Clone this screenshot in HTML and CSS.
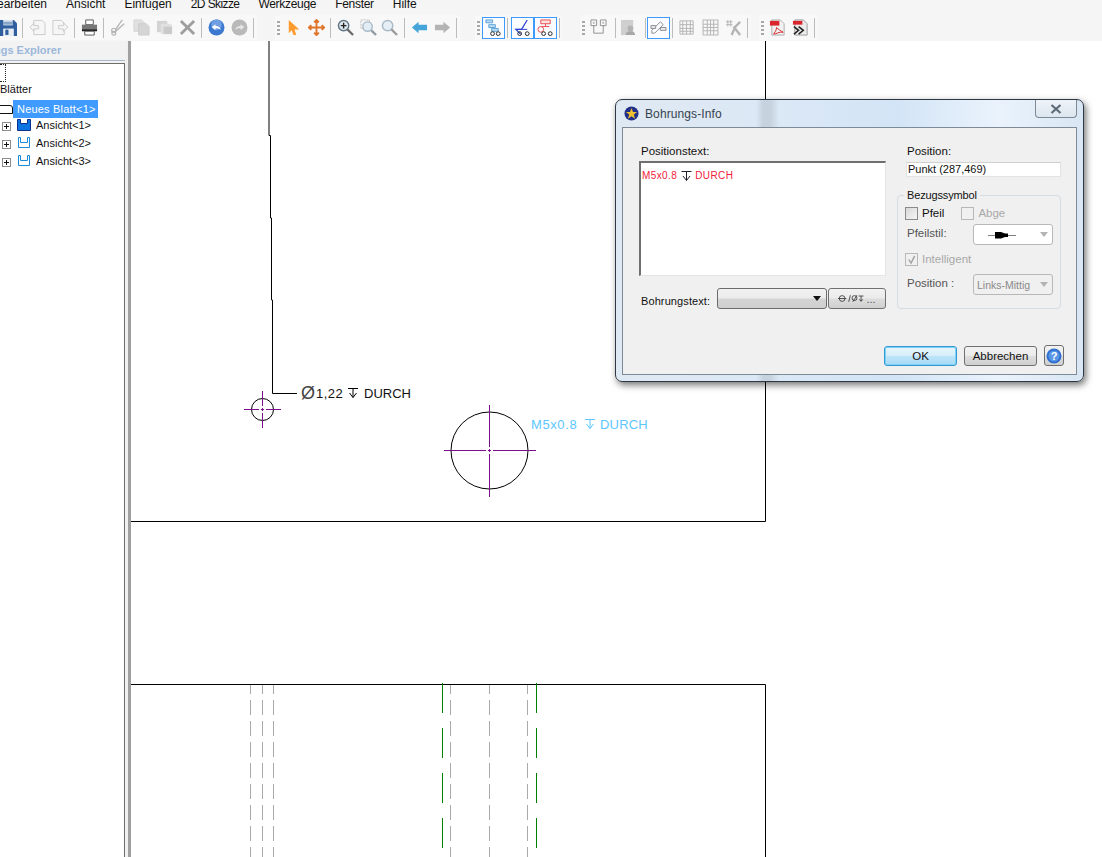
FILE: index.html
```html
<!DOCTYPE html>
<html lang="en">
<head>
    <meta charset="UTF-8">
    <title>Bohrungs-Info</title>
    <link rel="stylesheet" href="styles.css">
</head>
<body>
    <!-- Menu, cut off at the top of the shot -->
    <nav class="menu-bar">
        <span>Bearbeiten</span>
        <span>Ansicht</span>
        <span>Einfügen</span>
        <span class="narrow">2D Skizze</span>
        <span class="snug">Werkzeuge</span>
        <span class="snug">Fenster</span>
        <span>Hilfe</span>
    </nav>

    <div class="tool-bar">
        <div class="tool-group first">
            <span class="tool"><svg viewBox="0 0 16 16"><path d="M0 1h13l3 3v12H0z" fill="#2f5f9e"/><path d="M3 1h9v5H3z" fill="#dfe8f2"/><path d="M3 3h9M3 4.6h9" stroke="#6c8fb8"/><path d="M3 9h10v7H3z" fill="#e8edf3"/><path d="M5 10h3v5H5z" fill="#2f5f9e"/></svg></span>
            <i class="sep"></i>
            <span class="tool"><svg viewBox="0 0 18 18" class="off"><path d="M5 1.500h9l3 3v12H5z" fill="#f6f6f6" stroke="#c4c4c4"/><path d="M1 8.500 5 4.500V7h5v3.500H5V13z" fill="#f6f6f6" stroke="#c4c4c4"/></svg></span>
            <span class="tool"><svg viewBox="0 0 18 18" class="off"><path d="M1 1.500h9l3 3v12H1z" fill="#f6f6f6" stroke="#c4c4c4"/><path d="M17 8.500 12 4.500V7H7v3.500h5V13z" fill="#f6f6f6" stroke="#c4c4c4"/></svg></span>
            <i class="sep"></i>
            <span class="tool"><svg viewBox="0 0 18 18"><path d="M5 1h8v5H5z" fill="#fff" stroke="#555"/><path d="M1 6h16v6H1z" fill="#777"/><path d="M1 11h16v2H1z" fill="#222"/><path d="M4 13h10v4H4z" fill="#fff" stroke="#555"/></svg></span>
            <i class="sep"></i>
            <span class="tool"><svg viewBox="0 0 18 18" class="off" fill="none" stroke="#a8a8a8" stroke-width="1.3"><path d="M13 1 6 11M15 5 6 13"/><circle cx="4" cy="12" r="2.2"/><circle cx="4" cy="15" r="2"/></svg></span>
            <span class="tool"><svg viewBox="0 0 18 18" class="off"><path d="M1 1h8l3 3v9H1z" fill="#dcdcdc" stroke="#cfcfcf"/><path d="M6 5h8l3 3v9H6z" fill="#d0d0d0" stroke="#c6c6c6"/></svg></span>
            <span class="tool"><svg viewBox="0 0 18 18" class="off"><path d="M1 2h11v12H1z" fill="#cdcdcd"/><path d="M5 5h10l2 2v9H5z" fill="#dedede"/><path d="M8 8h9v8H8z" fill="#c2c2c2"/></svg></span>
            <span class="tool"><svg viewBox="0 0 18 18" class="off"><path d="M2 2 16 16M16 2 2 16" stroke="#8f8f8f" stroke-width="3"/></svg></span>
            <i class="sep"></i>
            <span class="tool"><svg viewBox="0 0 16 16"><circle cx="8" cy="8" r="7.5" fill="#3b78d0"/><circle cx="8" cy="5.5" r="5" fill="#6f9fe2"/><path d="M3.500 7.500 7 5v1.600c3 0 4.600 1.400 5 3.800-1.200-1.300-2.800-1.800-5-1.600v1.700z" fill="#fff"/></svg></span>
            <span class="tool"><svg viewBox="0 0 16 16"><circle cx="8" cy="8" r="7.500" fill="#b9b9b9"/><path d="M12.500 7.500 9 5v1.600c-3 0-4.600 1.400-5 3.800 1.200-1.300 2.800-1.800 5-1.600v1.700z" fill="#e6e6e6"/></svg></span>
            <i class="sep"></i>
        </div>

        <div class="tool-group view-tools">
            <i class="grip"></i>
            <span class="tool"><svg viewBox="0 0 16 18"><path d="M3 1 14 11 9 11 11 17 8 17 6 12 3 15z" fill="#ff9a2e"/></svg></span>
            <span class="tool"><svg viewBox="0 0 18 18" fill="none" stroke="#e0762a" stroke-width="2"><path d="M9 1v16M1 9h16M6.500 3.500 9 1l2.500 2.500M6.500 14.500 9 17l2.500-2.500M3.500 6.500 1 9l2.500 2.500M14.500 6.500 17 9l-2.500 2.500"/></svg></span>
            <i class="sep"></i>
            <span class="tool"><svg viewBox="0 0 18 18" fill="none"><circle cx="7" cy="7" r="5.500" fill="#dfe8ef" stroke="#5f7484" stroke-width="1.500"/><path d="M4 7h6M7 4v6" stroke="#222" stroke-width="1.500"/><path d="m11 11 6 6" stroke="#6b6b6b" stroke-width="2.400"/></svg></span>
            <span class="tool"><svg viewBox="0 0 18 18" fill="none"><path d="M1 1h9v9H1z" stroke="#bbb" stroke-dasharray="2 1"/><circle cx="8" cy="8" r="5" fill="#e3edf5" stroke="#a9bac7" stroke-width="1.500"/><path d="m12 12 5 5" stroke="#8d9aa5" stroke-width="2.400"/></svg></span>
            <span class="tool pull"><svg viewBox="0 0 18 18" fill="none"><circle cx="7" cy="7" r="5.500" fill="#e6eff6" stroke="#a9bac7" stroke-width="1.500"/><path d="m11 11 6 6" stroke="#9a9a9a" stroke-width="2.400"/></svg></span>
            <i class="sep"></i>
            <span class="tool"><svg viewBox="0 0 18 14"><path d="M1 7 8 1v3h9v6H8v3z" fill="#45a5d8"/></svg></span>
            <span class="tool"><svg viewBox="0 0 18 14"><path d="M17 7 10 1v3H1v6h9v3z" fill="#b4b4b4"/></svg></span>
            <i class="sep"></i>
        </div>

        <div class="tool-group tree-tools">
            <i class="grip"></i>
            <span class="tool picked"><svg viewBox="0 0 18 18" fill="none"><path d="M1 1h7v3H1zM4 6h7v3H4z" fill="#bcdcf4" stroke="#5aa0d8"/><path d="M7 10h7v3H7z" fill="#bcdcf4" stroke="#5aa0d8"/><circle cx="8" cy="15.500" r="2" stroke="#222"/><circle cx="14" cy="15.500" r="2" stroke="#222"/></svg></span>
            <i class="sep tight"></i>
            <span class="tool picked"><svg viewBox="0 0 18 18" fill="none"><path d="M14 1 8 11H2l5 5" stroke="#2a3fd0" stroke-width="1.300"/><path d="M2 11h12" stroke="#2a3fd0"/><circle cx="6" cy="15.500" r="2" stroke="#222"/><circle cx="14" cy="15.500" r="2" stroke="#222"/></svg></span>
            <span class="tool picked"><svg viewBox="0 0 18 18" fill="none"><path d="M4 1h10v4H4z" fill="#fde0e0" stroke="#e84848"/><path d="M9 5v3M5 8h8" stroke="#e84848"/><circle cx="4" cy="11" r="3" stroke="#e84848"/><circle cx="7" cy="15.500" r="2" stroke="#222"/><circle cx="14" cy="15.500" r="2" stroke="#222"/></svg></span>
            <i class="sep last"></i>
        </div>

        <div class="tool-group grid-tools">
            <i class="grip"></i>
            <span class="tool"><svg viewBox="0 0 18 18" fill="none" stroke="#8f8f8f"><path d="M1 1h6v6H1zM11 1h6v6h-6zM4 7v8h10V7"/><path d="M3 3h2v2H3zM13 3h2v2h-2z" fill="#bbb" stroke="none"/></svg></span>
            <i class="sep wide"></i>
            <span class="tool"><svg viewBox="0 0 18 18"><path d="M1 1h13v16H1z" fill="#cfcfcf"/><circle cx="11" cy="10" r="3" fill="#b2b2b2"/><path d="M6 17c0-3 2-4 5-4s5 1 5 4z" fill="#a8a8a8"/></svg></span>
            <i class="sep wide"></i>
            <span class="tool picked"><svg viewBox="0 0 18 18" fill="none" stroke="#888"><path d="m2 12 9-9 3 3-9 9H2z"/><path d="M1 7h5v3H1zM11 9h6v3h-6z" fill="#eee"/></svg></span>
            <i class="sep"></i>
            <span class="tool"><svg viewBox="0 0 18 18" fill="none" stroke="#b2b2b2"><path d="M1 2h14v14H1zM1 6h14M1 10h14M1 13h14M4 2v14M8 2v14M12 2v14"/></svg></span>
            <span class="tool"><svg viewBox="0 0 16 16" fill="none" stroke="#b8b8b8"><path d="M1 1h14v14H1zM1 5h14M1 8h14M1 11h14M5 1v14M8 1v14M11 1v14"/></svg></span>
            <span class="tool"><svg viewBox="0 0 18 18" fill="none" stroke="#b4b4b4"><path d="M1 3h7M1 6h7M3 1v7M6 1v7"/><path d="m9 8 7 9M16 3l-5 5-4 9" stroke-width="2.500"/></svg></span>
            <i class="sep"></i>
        </div>

        <div class="tool-group">
            <i class="grip"></i>
            <span class="tool"><svg viewBox="0 0 18 18"><path d="M3 1h9l4 4v12H3z" fill="#f2f2f2" stroke="#aaa"/><path d="M1 2h10v5H1z" fill="#d8262c"/><path d="M8 9c0 4-3 6-3 7 2 0 7-3 10-2-2-1-5-3-7-5z" fill="none" stroke="#d8262c"/></svg></span>
            <span class="tool"><svg viewBox="0 0 18 18"><path d="M3 1h9l4 4v12H3z" fill="#ececec" stroke="#999"/><path d="M1 2h10v4H1z" fill="#d8262c"/><path d="m2 8 5 4-5 4M7 8l5 4-5 4" fill="none" stroke="#222" stroke-width="1.600"/></svg></span>
            <i class="sep"></i>
        </div>
    </div>

    <main class="work-area">
        <aside class="side-panel">
            <h2 class="panel-title">Drawings Explorer</h2>
            <div class="tree-box">
                <div class="tree-root"></div>
                <div class="tree-row">Blätter</div>
                <div class="tree-row sheet-row">
                    <i class="sheet-icon"></i>
                    <span class="tree-picked">Neues Blatt&lt;1&gt;</span>
                </div>
                <div class="tree-row view-row first-view">
                    <i class="plus"></i>
                    <svg class="view-icon" viewBox="0 0 14 12"><path d="M.5.500h3v4h7v-4h3v11H.5z" fill="#0b74e0" stroke="#0a2f8a"/></svg>
                    <span>Ansicht&lt;1&gt;</span>
                </div>
                <div class="tree-row view-row">
                    <i class="plus"></i>
                    <svg class="view-icon" viewBox="0 0 14 12"><path d="M1.500.500v10h11V.500M1.500.500h2v5h7v-5h2" fill="none" stroke="#1d8ad8"/></svg>
                    <span>Ansicht&lt;2&gt;</span>
                </div>
                <div class="tree-row view-row">
                    <i class="plus"></i>
                    <svg class="view-icon" viewBox="0 0 14 12"><path d="M1.500.500v10h11V.500M1.500.500h2v5h7v-5h2" fill="none" stroke="#1d8ad8"/></svg>
                    <span>Ansicht&lt;3&gt;</span>
                </div>
            </div>
        </aside>
        <div class="splitter"></div>

        <!-- viewBox is in page coordinates -->
        <svg class="sheet" viewBox="131 41 971 816">
            <g fill="none" stroke="#000">
                <path d="M269 41V135.500H270.500V218H271.500V300H272.500V393.500H297"/>
                <path d="M765.500 41V521.500H131"/>
                <path d="M131 684.500H765.500V857"/>
                <circle cx="262.500" cy="409.500" r="11"/>
                <circle cx="489.500" cy="450.500" r="38.500"/>
            </g>
            <g stroke="#7b0f8c" fill="none">
                <path d="M244 409.500h15m2 0h3m2 0h15M262.500 391v15m0 2v3m0 2v15"/>
                <path d="M444 450.500h42m2 0h3m2 0h43M489.500 405v42m0 2v3m0 2v43"/>
            </g>
            <text class="dim dia" x="301" y="399">Ø</text>
            <text class="dim" x="316" y="398" letter-spacing=".5">1,22</text>
            <path d="M348 388.500h10M353 388.500v9M349.500 393l3.500 4.500 3.500-4.500" fill="none" stroke="#000"/>
            <text class="dim" x="364" y="398">DURCH</text>
            <text class="dim blue" x="531" y="429" letter-spacing=".6">M5x0.8</text>
            <text class="dim blue" x="600" y="429" letter-spacing=".2">DURCH</text>
            <path d="M585 419.500h10M590 419.500v9M586.500 424l3.500 4.500 3.500-4.500" fill="none" stroke="#5cc6ff"/>
            <path class="hidden-line" d="M250.500 685V857M262.500 685V857M273.500 685V857M450.500 685V857M489.500 685V857M527.500 685V857"/>
            <path class="hole-line" d="M442.500 683V857M536.500 683V857"/>
        </svg>
    </main>

    <section class="dialog">
        <header class="dialog-title">
            <svg class="app-icon" viewBox="0 0 16 16"><circle cx="8" cy="8" r="7.500" fill="#23308a"/><path d="m8 2 1.600 4.300H14l-3.600 2.700 1.400 4.500L8 10.800l-3.800 2.700L5.600 9 2 6.300h4.400z" fill="#f2c230"/></svg>
            <span>Bohrungs-Info</span>
            <button class="close-btn"><svg viewBox="0 0 12 10"><path d="m1.500 1 9 8m0-8-9 8" stroke="#5b6a78" stroke-width="2.200"/></svg></button>
        </header>
        <div class="dialog-client">
            <div class="dialog-main">
                <div class="col-left">
                    <div class="field-label">Positionstext:</div>
                    <div class="text-box">
                        <span>M5x0.8</span>
                        <svg class="depth-sign" viewBox="0 0 11 11"><path d="M.5 1.500h10M5.500 1.500v9M2 6l3.500 4.500L9 6" fill="none" stroke="#223"/></svg>
                        <span>DURCH</span>
                    </div>
                    <div class="hole-row">
                        <label class="hole-label">Bohrungstext:</label>
                        <div class="hole-combo"><i class="caret dark"></i></div>
                        <button class="symbol-btn">
                            <svg viewBox="0 0 34 10"><g fill="none" stroke="#333"><circle cx="5" cy="5" r="3.500"/><path d="M0 5h10M13 9l2-8"/><circle cx="20" cy="4.500" r="3"/><path d="M18 9l5-8M25 2h6M28 2v6M26 6l2 2.500L30 6"/></g></svg><span>...</span>
                        </button>
                    </div>
                </div>
                <div class="col-right">
                    <div class="field-label">Position:</div>
                    <div class="pos-input">Punkt (287,469)</div>
                    <fieldset class="ref-group">
                        <legend>Bezugssymbol</legend>
                        <div class="check-row">
                            <i class="check"></i><span class="check-text">Pfeil</span>
                            <i class="check off second"></i><span class="check-text muted">Abge</span>
                        </div>
                        <div class="select-row">
                            <span class="row-label">Pfeilstil:</span>
                            <div class="select-box">
                                <svg class="arrow-style" viewBox="0 0 28 8"><path d="M0 4h7l0-3h6l4 1.500h3V4h8v.500h-8v1.500h-3l-4 1.500H7v-3H0z"/></svg>
                                <i class="caret"></i>
                            </div>
                        </div>
                        <div class="check-row smart">
                            <i class="check off"><svg viewBox="0 0 12 12"><path d="m3 6 2.500 4L9.500 2" fill="none" stroke="#a0a0a0" stroke-width="1.500"/></svg></i>
                            <span class="check-text muted">Intelligent</span>
                        </div>
                        <div class="select-row last">
                            <span class="row-label">Position :</span>
                            <div class="select-box disabled">
                                <span>Links-Mittig</span>
                                <i class="caret"></i>
                            </div>
                        </div>
                    </fieldset>
                </div>
            </div>
            <footer class="dialog-foot">
                <button class="btn primary">OK</button>
                <button class="btn">Abbrechen</button>
                <button class="btn help-btn"><svg viewBox="0 0 16 16"><circle cx="8" cy="8" r="7.500" fill="#2f6fd0"/><circle cx="8" cy="8" r="5.500" fill="#5a96e6"/><text x="8" y="12" text-anchor="middle" class="help-mark">?</text></svg></button>
            </footer>
        </div>
    </section>
</body>
</html>
```

FILE: styles.css
```css
* {
    margin: 0;
    padding: 0;
    box-sizing: border-box;
    font-family: 'Liberation Sans', Arial, sans-serif;
}

body {
    width: 1102px;
    height: 857px;
    overflow: hidden;
    position: relative;
    background-color: #fff;
    display: flex;
    flex-direction: column;
}

.menu-bar {
    height: 10px;
    flex: none;
    background-color: #f5f5f5;
    display: flex;
    gap: 19px;
    margin-left: -11px;
    font-size: 12px;
    line-height: 10px;
    color: #111;
    overflow: hidden;
    align-items: flex-end;
    white-space: nowrap;
}

.menu-bar span {
    position: relative;
    top: -1px;
}

.menu-bar .narrow {
    letter-spacing: -0.6px;
}

.menu-bar .snug {
    letter-spacing: -0.3px;
}

.tool-bar {
    height: 31px;
    flex: none;
    background-color: #f5f5f5;
    display: flex;
    align-items: flex-start;
    padding-top: 5px;
}

.tool-group {
    height: 25px;
    display: flex;
    align-items: center;
    background-color: #f8f8f8;
    border-radius: 4px 4px 0 0;
    padding-left: 2px;
    margin-right: 19px;
}

.tool-group.first {
    margin-left: -3px;
    padding-left: 0;
    margin-right: 18px;
}

.tool-group.view-tools {
    margin-right: 15px;
}

.tool-group.tree-tools {
    margin-right: 18px;
}

.tool-group.grid-tools {
    margin-right: 8px;
}

.tool {
    width: 22px;
    height: 22px;
    margin-right: 1px;
    display: flex;
    align-items: center;
    justify-content: center;
    flex: none;
}

.tool.pull {
    margin-left: -2px;
    margin-right: 2px;
}

.tool svg {
    width: 17px;
    height: 17px;
}

.tool svg.off {
    opacity: 0.85;
}

.tool.picked {
    width: 23px;
    border: 1px solid #3d9bff;
    background-color: #fafcff;
    margin-right: 0;
}

.sep {
    width: 1px;
    height: 20px;
    background-color: #bcbcbc;
    margin: 0 3px 0 2px;
    flex: none;
}

.sep.tight {
    margin: 0 3px 0 2px;
}

.sep.last {
    margin: 0 2px 0 2px;
}

.sep.wide {
    margin: 0 1px 0 5px;
}

.grip {
    width: 3px;
    height: 15px;
    flex: none;
    margin-right: 2px;
    background-image: radial-gradient(circle, #a8a8a8 1.2px, transparent 1.4px);
    background-size: 3px 4px;
}

.work-area {
    flex: 1;
    display: flex;
    min-height: 0;
}

.side-panel {
    width: 125px;
    flex: none;
    background-color: #f2f2f2;
    display: flex;
    flex-direction: column;
    overflow: hidden;
}

.panel-title {
    height: 20px;
    margin-left: -36px;
    width: 161px;
    font-size: 11px;
    line-height: 18px;
    font-weight: bold;
    color: #9bb8da;
    white-space: nowrap;
    border-bottom: 1px solid #a9b9cb;
}

.tree-box {
    flex: 1;
    margin-top: 2px;
    background-color: #fff;
    border-top: 1px solid #6d6d6d;
    border-right: 1px solid #6d6d6d;
    font-size: 11px;
    color: #111;
}

.tree-root {
    width: 6px;
    height: 18px;
    margin-bottom: -2px;
    border: 1px dotted #222;
    border-left: none;
}

.tree-row {
    height: 18px;
    line-height: 17px;
    display: flex;
    align-items: center;
    white-space: nowrap;
}

.sheet-row {
    margin-top: 2px;
}

.sheet-icon {
    width: 14px;
    height: 9px;
    margin-left: -1px;
    border: 1px solid #111;
    border-radius: 0 3px 0 0;
    flex: none;
}

.tree-picked {
    width: 85px;
    background-color: #3f9bff;
    color: #fff;
    padding-left: 4px;
    line-height: 18px;
    letter-spacing: 0.2px;
}

.first-view {
    margin-top: -2px;
}

.plus {
    width: 9px;
    height: 9px;
    margin-left: 2px;
    margin-top: 3px;
    flex: none;
    border: 1px solid #8b8b8b;
    background: linear-gradient(#111, #111) center / 5px 1px no-repeat,
        linear-gradient(#111, #111) center / 1px 5px no-repeat, #fff;
}

.view-icon {
    width: 14px;
    height: 12px;
    margin-left: 6px;
    margin-right: 5px;
    flex: none;
}

.splitter {
    width: 6px;
    flex: none;
    background: linear-gradient(90deg, #f0f0f0 0, #f0f0f0 3px, #a0a0a0 3px);
}

.sheet {
    flex: 1;
    display: block;
    height: 816px;
}

.dim {
    font-size: 13px;
    fill: #111;
}

.dim.dia {
    font-size: 18px;
    fill: #444;
}

.dim.blue {
    fill: #5cc6ff;
}

.hidden-line {
    fill: none;
    stroke: #aaa;
    stroke-dasharray: 15 6;
    stroke-dashoffset: 6;
}

.hole-line {
    fill: none;
    stroke: #008000;
    stroke-dasharray: 30 15;
}

/* dialog floats over the drawing */
.dialog {
    position: absolute;
    left: 615px;
    top: 99px;
    width: 469px;
    height: 283px;
    padding: 0 6px 6px;
    border: 1px solid #2e3844;
    border-radius: 7px;
    box-shadow: 2px 3px 7px rgba(0, 0, 0, 0.55);
    background: linear-gradient(90deg, #dfe9f3 0, #dce8f5 30%, #c6d2de 31.500%, #c6d2de 33%, #dbe8f6 35%, #d3e4f6 60%, #eaf3fc 82%, #d9e6f3 100%);
    display: flex;
    flex-direction: column;
}

.dialog-title {
    height: 27px;
    flex: none;
    display: flex;
    align-items: flex-start;
    font-size: 12px;
    color: #36424e;
}

.app-icon {
    width: 15px;
    height: 15px;
    margin: 6px 6px 0 2px;
}

.dialog-title span {
    margin-top: 7px;
    letter-spacing: 0.1px;
}

.close-btn {
    margin-left: auto;
    width: 42px;
    height: 18px;
    border: 1px solid #7c8997;
    border-top: none;
    border-radius: 0 0 4px 4px;
    background: linear-gradient(#eef3f8, #dde6ee);
    display: flex;
    align-items: center;
    justify-content: center;
}

.close-btn svg {
    width: 12px;
    height: 10px;
}

.dialog-client {
    flex: 1;
    background-color: #f0f0f0;
    border: 1px solid #7d8b99;
    display: flex;
    flex-direction: column;
    padding: 16px 0 0 16px;
    font-size: 12px;
    color: #111;
}

.dialog-main {
    display: flex;
}

.col-left {
    width: 247px;
}

.col-right {
    width: 164px;
    margin-left: 11px;
}

.field-label {
    height: 14px;
    line-height: 14px;
    padding-left: 2px;
    font-size: 11.5px;
}

.col-right .field-label {
    padding-left: 10px;
}

.text-box {
    height: 115px;
    margin-top: 3px;
    background-color: #fff;
    border: 2px solid;
    border-color: #6f6f6f #e4e4e4 #e4e4e4 #6f6f6f;
    border-right-width: 1px;
    border-bottom-width: 1px;
    padding: 7px 0 0 1px;
    font-size: 10px;
    line-height: 12px;
    letter-spacing: 0.4px;
    color: #f0203a;
    display: flex;
    align-items: flex-start;
}

.depth-sign {
    width: 11px;
    height: 11px;
    margin: 0 3px 0 4px;
}

.hole-row {
    display: flex;
    align-items: center;
    margin-top: 11px;
}

.hole-label {
    width: 78px;
    padding-left: 2px;
    margin-top: 6px;
    font-size: 11px;
    letter-spacing: 0.1px;
}

.hole-combo {
    width: 110px;
    height: 21px;
    border: 1px solid #6b6b6b;
    border-radius: 3px;
    background: linear-gradient(#f2f2f2 0, #ebebeb 48%, #d4d4d4 52%, #cfcfcf 100%);
    display: flex;
    align-items: center;
    justify-content: flex-end;
    padding-right: 5px;
}

.caret {
    width: 0;
    height: 0;
    border-left: 4px solid transparent;
    border-right: 4px solid transparent;
    border-top: 5px solid #b3b3b3;
}

.caret.dark {
    border-top-color: #111;
}

.symbol-btn {
    width: 58px;
    height: 21px;
    margin-left: 1px;
    margin-top: 1px;
    border: 1px solid #707070;
    border-radius: 3px;
    background: linear-gradient(#f2f2f2 0, #ebebeb 48%, #ddd 52%, #cfcfcf 100%);
    display: flex;
    align-items: center;
    justify-content: center;
    font-size: 11px;
    color: #555;
}

.symbol-btn svg {
    width: 28px;
    height: 9px;
}

.pos-input {
    height: 15px;
    margin: 4px 0 0 9px;
    background-color: #fff;
    border: 1px solid #e3e3e3;
    border-top-color: #d0d0d0;
    line-height: 13px;
    font-size: 11px;
    padding-left: 1px;
}

.ref-group {
    height: 121px;
    margin-top: 11px;
    border: 1px solid #d5dde3;
    border-radius: 4px;
    padding: 4px 7px 0;
}

.ref-group legend {
    margin-left: -1px;
    padding: 0 3px;
    font-size: 11px;
    line-height: 14px;
    letter-spacing: -0.15px;
}

.check-row {
    display: flex;
    align-items: center;
    height: 14px;
}

.check-row.smart {
    margin-top: 7px;
}

.check {
    width: 13px;
    height: 13px;
    border: 1px solid #8a8a8a;
    background: linear-gradient(135deg, #d8d8d8, #f6f6f6);
    flex: none;
    display: block;
}

.check.off {
    border-color: #b8b8b8;
    background: #f0f0f0;
}

.check.off svg {
    display: block;
    width: 11px;
    height: 11px;
}

.check.second {
    margin-left: 17px;
}

.check-text {
    margin-left: 4px;
    font-size: 11.5px;
}

.muted {
    color: #a9a9a9;
}

.select-row {
    display: flex;
    align-items: center;
    margin-top: 4px;
}

.select-row.last {
    margin-top: 8px;
}

.row-label {
    width: 68px;
    padding-left: 2px;
    color: #555;
    font-size: 11.5px;
    margin-top: -3px;
}

.select-box {
    width: 80px;
    height: 21px;
    background-color: #fff;
    border: 1px solid #b8b8b8;
    border-radius: 3px;
    display: flex;
    align-items: center;
    justify-content: space-between;
    padding: 0 4px 0 14px;
}

.select-box.disabled {
    background-color: #f0f0f0;
    padding-left: 3px;
    color: #8a8a8a;
    font-size: 10.5px;
}

.arrow-style {
    width: 28px;
    height: 8px;
}

.dialog-foot {
    margin-top: auto;
    display: flex;
    justify-content: flex-end;
    gap: 7px;
    padding: 0 12px 8px 0;
}

.btn {
    width: 73px;
    height: 20px;
    border: 1px solid #707070;
    border-radius: 3px;
    background: linear-gradient(#f2f2f2 0, #ebebeb 48%, #ddd 52%, #cfcfcf 100%);
    font-size: 11.5px;
    color: #111;
}

.btn.primary {
    border-color: #2f9bd6;
    box-shadow: 0 0 0 1px #7fd0f2 inset;
    background: linear-gradient(#e8f5fc 0, #d6eefb 48%, #bde4f8 52%, #a7d9f5 100%);
}

.btn.help-btn {
    width: 20px;
    height: 21px;
    display: flex;
    align-items: center;
    justify-content: center;
    margin-top: -1px;
}

.help-btn svg {
    width: 16px;
    height: 16px;
}

.help-mark {
    font-size: 11px;
    font-weight: bold;
    fill: #fff;
}
```
